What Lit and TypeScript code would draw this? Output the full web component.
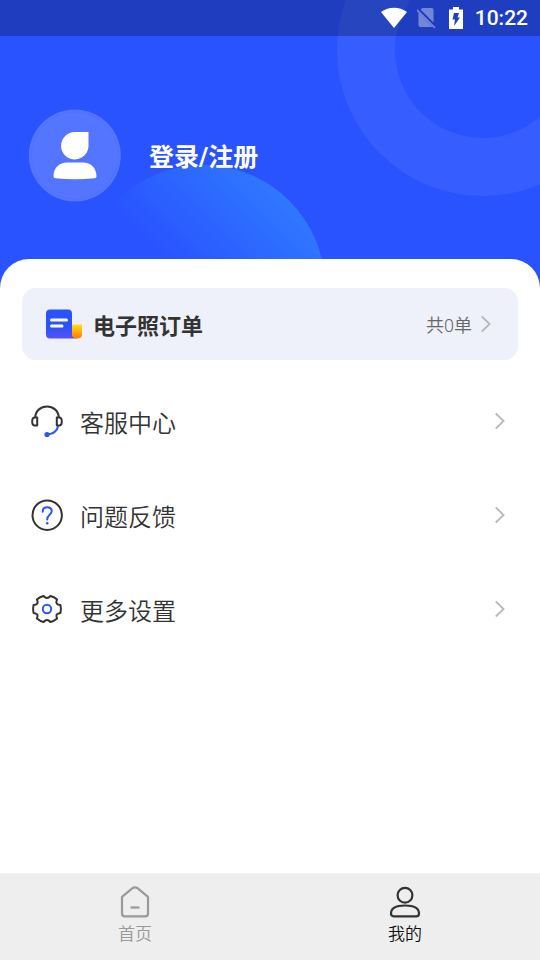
import { LitElement, html, css, svg } from "lit";
import { customElement } from "lit/decorators.js";

const chevron = html`<svg class="chevron" width="12" height="18" viewBox="0 0 12 18" aria-hidden="true">
  <path d="M1.8 1.5 9.6 9 1.8 16.5" fill="none" stroke="#b8b8b8" stroke-width="1.8" />
</svg>`;

const icons = {
  service: svg`
    <g fill="none" stroke="#333" stroke-width="2">
      <path d="M4.200 12.500C4.500 5.500 10 1.500 16 1.500S27.500 5.500 27.800 12.500" />
      <path d="M6.200 12.500V20.500H3.800C1.800 20.500 1.200 19 1.200 16.500S1.800 12.500 3.800 12.500Z" stroke-linejoin="round" />
      <path d="M25.800 12.500V20.500H28.200C30.200 20.500 30.800 19 30.800 16.500S30.200 12.500 28.200 12.500Z" stroke-linejoin="round" />
    </g>
    <path d="M27.200 21C26.200 25.500 22.500 28.800 16.500 29.500" fill="none" stroke="#2953ff" stroke-width="2" />
    <circle cx="16" cy="29.500" r="2.600" fill="#2953ff" />`,
  help: svg`
    <circle cx="16.200" cy="16.200" r="14.700" fill="none" stroke="#333" stroke-width="2" />
    <path d="M11.700 12.700C11.700 9.800 13.500 8.300 16.200 8.300S20.700 9.800 20.700 12.200C20.700 15.800 16.200 16 16.200 20.500"
      fill="none" stroke="#2953ff" stroke-width="2" stroke-linecap="round" />
    <circle cx="16.200" cy="24.200" r="1.300" fill="#2953ff" />`,
  settings: svg`
    <path d="M29.500 12.100Q30.300 16 29.500 19.900Q23.600 20.400 26.100 25.500Q23 28.200 19.400 29Q16 24.800 12.600 29
      Q9 28.200 5.900 25.500Q8.400 20.400 2.500 19.900Q1.700 16 2.500 12.100Q8.400 11.600 5.900 6.500Q9 3.800 12.600 3
      Q16 7.200 19.400 3Q23 3.800 26.100 6.500Q23.600 11.600 29.500 12.100Z"
      fill="none" stroke="#333" stroke-width="2" stroke-linejoin="round" />
    <circle cx="16" cy="16" r="4.200" fill="none" stroke="#2953ff" stroke-width="2" />`,
};

const rows = [
  { label: "客服中心", icon: icons.service },
  { label: "问题反馈", icon: icons.help },
  { label: "更多设置", icon: icons.settings },
];

@customElement("app-root")
export class AppRoot extends LitElement {
  static styles = css`
    :host {
      display: flex;
      flex-direction: column;
      min-height: 100vh;
      background: #fff;
      color: #333;
      font-family: Roboto, "Noto Sans CJK SC", sans-serif;
    }
    button {
      margin: 0;
      padding: 0;
      border: 0;
      background: none;
      color: inherit;
      font: inherit;
      text-align: left;
      cursor: pointer;
    }
    svg {
      display: block;
      flex: none;
    }
    .hero {
      position: relative;
      overflow: hidden;
      background: #2953ff;
      color: #fff;
      padding-bottom: 86px;
    }
    .ring {
      position: absolute;
      top: -96px;
      right: -89px;
      width: 292px;
      height: 292px;
      box-sizing: border-box;
      border: 58px solid rgba(255, 255, 255, 0.06);
      border-radius: 50%;
    }
    .glow {
      position: absolute;
      top: 165px;
      left: 81px;
      width: 244px;
      height: 244px;
      border-radius: 50%;
      background: linear-gradient(45deg, rgba(48, 124, 255, 0) 48%, #307cff 90%);
    }
    .status {
      position: relative;
      display: flex;
      align-items: center;
      justify-content: flex-end;
      height: 36px;
      padding-right: 12px;
      background: rgba(0, 0, 0, 0.25);
      font-size: 21px;
      line-height: 24px;
      font-weight: 500;
    }
    .status svg {
      margin-right: 10px;
    }
    .profile {
      position: relative;
      display: flex;
      align-items: center;
      gap: 28px;
      margin: 73px 0 0 28px;
      font-size: 25px;
      line-height: 36px;
      font-weight: 700;
    }
    .profile span {
      padding-top: 4px;
    }
    .sheet {
      position: relative;
      flex: 1;
      margin-top: -29px;
      padding: 29px 22px 0;
      border-radius: 29px 29px 0 0;
      background: #fff;
    }
    .order {
      display: flex;
      align-items: center;
      width: 100%;
      height: 72px;
      margin-bottom: 14px;
      padding: 0 26px 0 24px;
      border-radius: 14px;
      background: #eef1fa;
    }
    .order-title {
      flex: 1;
      margin-left: 11px;
      font-size: 22px;
      font-weight: 700;
    }
    .order-count {
      margin-right: 8px;
      font-size: 18px;
      font-weight: 350;
      color: #666;
    }
    .row {
      display: flex;
      align-items: center;
      gap: 16px;
      width: 100%;
      height: 94px;
      padding: 0 12px 0 9px;
      font-size: 24px;
      font-weight: 350;
    }
    .row-label {
      flex: 1;
    }
    .tabs {
      display: flex;
      background: #eee;
      border-top: 1px solid #f2f2f2;
      box-shadow: 0 -1px 2px #f4f4f4;
    }
    .tab {
      flex: 1;
      display: flex;
      flex-direction: column;
      align-items: center;
      height: 86px;
      padding-top: 11px;
      font-size: 17px;
      font-weight: 350;
      line-height: 24px;
      color: #999;
    }
    .tab svg {
      margin-bottom: 3px;
    }
    .tab.active {
      color: #111;
    }
  `;

  render() {
    return html`
      <header class="hero">
        <div class="ring"></div>
        <div class="glow"></div>
        <div class="status">
          <svg width="26" height="22" viewBox="0 0 26 22" aria-hidden="true">
            <path d="M0 5C7.500-.800 18.500-.800 26 5L13 21Z" fill="#fff" />
          </svg>
          <svg width="20" height="22" viewBox="1 0 20 22" aria-hidden="true">
            <g fill="#fff" opacity=".38">
              <path d="M6.500 1H15.500Q17.500 1 17.500 3V15.500L4.600 2.600Z" />
              <path d="M2.500 5.500 16.500 20H4.500Q2.500 20 2.500 18Z" />
              <path d="M1.200 2 19.500 20.300 18.300 21.500 0 3.200Z" />
            </g>
          </svg>
          <svg width="18" height="22" viewBox="1 0 18 22" aria-hidden="true">
            <path d="M3 2.500H7V0H13V2.500H17V22H3Z" fill="#fff" />
            <path d="M8 6H13L11.500 10.500H14L8 19L9 12.500H6.500Z" fill="#1f3fc0" />
          </svg>
          <span>10:22</span>
        </div>
        <button class="profile">
          <svg width="93" height="93" viewBox="0 0 93 93" aria-hidden="true">
            <circle cx="46.800" cy="46.500" r="46" fill="#fff" fill-opacity=".2" />
            <circle cx="46.800" cy="46.500" r="43.500" fill="none" stroke="#2953ff" stroke-opacity=".12" />
            <path d="M47 23H60.500V36.500A13.700 13.700 0 1 1 47 23Z" fill="#fff" />
            <path d="M25.500 67.500C25.500 58.500 31.500 53.500 39 53.500H55C62.500 53.500 68.500 58.500 68.500 67.500Q68.500 69.200 66.500 69.300Q47 71 27.500 69.300Q25.500 69.200 25.500 67.500Z" fill="#fff" />
          </svg>
          <span>登录/注册</span>
        </button>
      </header>

      <main class="sheet">
        <button class="order">
          <svg width="36" height="30" viewBox="0 0 36 30" aria-hidden="true">
            <defs>
              <linearGradient id="paper" x1="0" y1="0" x2="0" y2="1">
                <stop offset=".6" stop-color="#2953ff" />
                <stop offset="1" stop-color="#5a50f0" />
              </linearGradient>
              <linearGradient id="curl" x1="0" y1="0" x2="0" y2="1">
                <stop offset="0" stop-color="#ffe01a" />
                <stop offset="1" stop-color="#ff7800" />
              </linearGradient>
            </defs>
            <path d="M4 .5H22Q26 .5 26 4.500V25Q26 28 31 29.500H4Q0 29.500 0 25.500V4.500Q0 .5 4 .5Z" fill="url(#paper)" />
            <path d="M26 15.500H36V25.500Q36 29.500 31 29.500T26 25.500Z" fill="url(#curl)" />
            <path d="M5.500 11H20.500M5.500 17H16" stroke="#fff" stroke-width="3" stroke-linecap="round" />
          </svg>
          <span class="order-title">电子照订单</span>
          <span class="order-count">共0单</span>
          ${chevron}
        </button>
        ${rows.map(
          (row) => html`<button class="row">
            <svg width="33" height="33" viewBox="0 0 33 33" aria-hidden="true">${row.icon}</svg>
            <span class="row-label">${row.label}</span>
            ${chevron}
          </button>`
        )}
      </main>

      <nav class="tabs">
        <button class="tab">
          <svg width="34" height="34" viewBox="0 0 34 34" aria-hidden="true">
            <g fill="none" stroke="#999" stroke-width="2.200">
              <path d="M4 11.800 14.500 3.200Q17 1.400 19.500 3.200L30 11.800V28.500Q30 31.300 27.200 31.300H6.800Q4 31.300 4 28.500Z" stroke-linejoin="round" />
              <path d="M12.500 22.500H21.500" />
            </g>
          </svg>
          <span>首页</span>
        </button>
        <button class="tab active" aria-current="page">
          <svg width="34" height="34" viewBox="0 0 34 34" aria-hidden="true">
            <g fill="none" stroke="#333" stroke-width="2.200">
              <circle cx="17" cy="10.300" r="7.400" />
              <path d="M3 28.500C3 23.500 7.500 20.500 17 20.500S31 23.500 31 28.500Q31 31.300 28.300 31.300H5.700Q3 31.300 3 28.500Z" />
            </g>
          </svg>
          <span>我的</span>
        </button>
      </nav>
    `;
  }
}
